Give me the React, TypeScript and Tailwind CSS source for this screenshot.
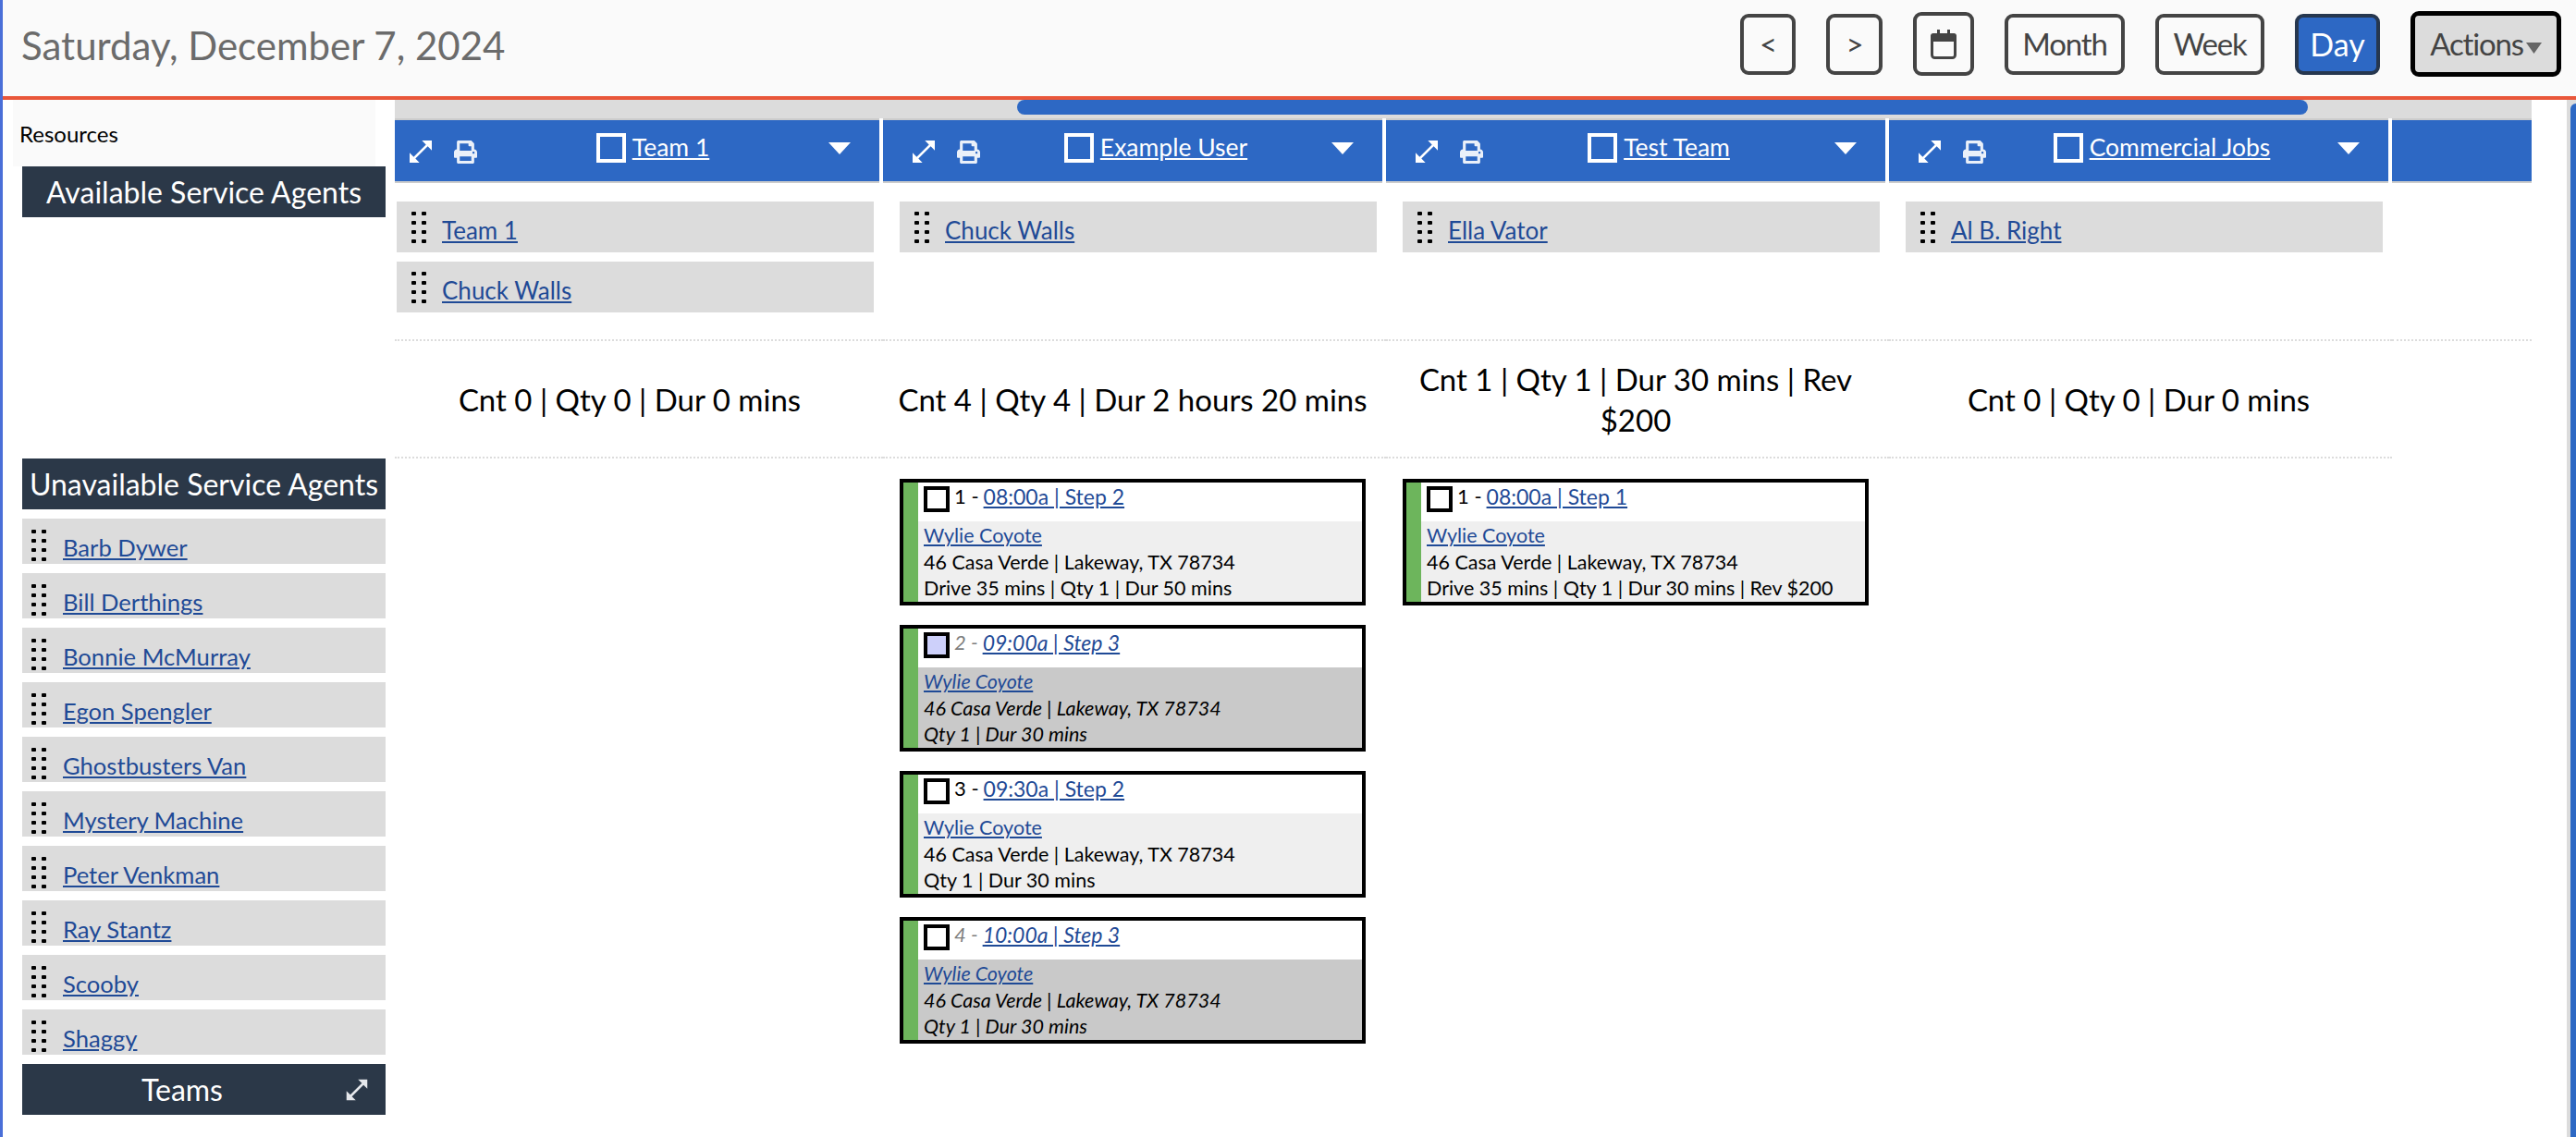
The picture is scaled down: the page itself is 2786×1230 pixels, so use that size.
import { MdOpenInFull } from "react-icons/md";
import { FaPrint } from "react-icons/fa";

const sans = "font-['Lato','Liberation_Sans',sans-serif]";

interface Job {
    n: number;
    time: string;
    last: string;
    dim?: boolean;
    picked?: boolean;
}

interface Column {
    title: string;
    width: string;
    agents: string[];
    summary: string;
    jobs: Job[];
}

const unavailable = [
    "Barb Dywer",
    "Bill Derthings",
    "Bonnie McMurray",
    "Egon Spengler",
    "Ghostbusters Van",
    "Mystery Machine",
    "Peter Venkman",
    "Ray Stantz",
    "Scooby",
    "Shaggy",
];

const columns: Column[] = [
    { title: "Team 1", width: "w-[528px]", agents: ["Team 1", "Chuck Walls"], summary: "Cnt 0 | Qty 0 | Dur 0 mins", jobs: [] },
    {
        title: "Example User",
        width: "w-[544px]",
        agents: ["Chuck Walls"],
        summary: "Cnt 4 | Qty 4 | Dur 2 hours 20 mins",
        jobs: [
            { n: 1, time: "08:00a | Step 2", last: "Drive 35 mins | Qty 1 | Dur 50 mins" },
            { n: 2, time: "09:00a | Step 3", last: "Qty 1 | Dur 30 mins", dim: true, picked: true },
            { n: 3, time: "09:30a | Step 2", last: "Qty 1 | Dur 30 mins" },
            { n: 4, time: "10:00a | Step 3", last: "Qty 1 | Dur 30 mins", dim: true },
        ],
    },
    {
        title: "Test Team",
        width: "w-[544px]",
        agents: ["Ella Vator"],
        summary: "Cnt 1 | Qty 1 | Dur 30 mins | Rev $200",
        jobs: [{ n: 1, time: "08:00a | Step 1", last: "Drive 35 mins | Qty 1 | Dur 30 mins | Rev $200" }],
    },
    { title: "Commercial Jobs", width: "w-[544px]", agents: ["Al B. Right"], summary: "Cnt 0 | Qty 0 | Dur 0 mins", jobs: [] },
];

function Grip() {
    return (
        <svg width="16" height="35" viewBox="0 0 16 35" className="shrink-0 text-black" fill="currentColor">
            {[2, 12, 22, 32].map(y => (
                <g key={y}>
                    <rect x="0" y={y - 2} width="5" height="4" rx="1" />
                    <rect x="11" y={y - 2} width="5" height="4" rx="1" />
                </g>
            ))}
        </svg>
    );
}

function CalendarIcon() {
    return (
        <svg width="28" height="32" viewBox="0 0 28 32" className="text-[#444]" fill="none">
            <rect x="1.5" y="5.5" width="25" height="25" rx="3" stroke="currentColor" strokeWidth="3" />
            <path d="M0 7a3 3 0 0 1 3-3h22a3 3 0 0 1 3 3v6H0z" fill="currentColor" />
            <rect x="7" y="0" width="3" height="5" fill="currentColor" />
            <rect x="18" y="0" width="3" height="5" fill="currentColor" />
        </svg>
    );
}

function NavButton({ label, className }: { label: React.ReactNode; className: string }) {
    return (
        <button className={`flex items-center justify-center rounded-[9px] border-4 border-[#444] text-[33px] leading-none tracking-[-0.036em] text-[#444] ${className}`}>
            {label}
        </button>
    );
}

function AgentRow({ name }: { name: string }) {
    return (
        <div className="flex h-[55px] items-start bg-[#dcdcdc] pl-[16px] pt-[11px]">
            <Grip />
            <a className="ml-[17px] mt-[4px] text-[26px] leading-[32px] text-[#1f4a96] underline">{name}</a>
        </div>
    );
}

function JobCard({ job }: { job: Job }) {
    return (
        <div className={`flex h-[137px] w-[504px] border-4 border-black ${job.dim ? "italic" : ""}`}>
            <div className="w-[16px] shrink-0 bg-[#6db55c]" />
            <div className="flex min-w-0 flex-1 flex-col text-[21.5px] leading-[28.5px]">
                <div className="flex h-[42px] items-start bg-white pl-[6px] pt-[4px]">
                    <span className={`h-[28px] w-[28px] shrink-0 border-4 border-black ${job.picked ? "bg-[#cdd0fa]" : "bg-white"}`} />
                    <span className={`ml-[5px] text-[22px] leading-[22px] ${job.dim ? "text-[#7d7d7d]" : "text-black"}`}>{job.n} - </span>
                    <a className="ml-[5px] text-[23px] leading-[22px] text-[#1f4a96] underline">{job.time}</a>
                </div>
                <div className={`flex-1 overflow-hidden pl-[6px] pt-[1px] text-black ${job.dim ? "bg-[#c9c9c9]" : "bg-[#efefef]"}`}>
                    <a className="block w-fit text-[#1f4a96] underline">Wylie Coyote</a>
                    <div>46 Casa Verde | Lakeway, TX 78734</div>
                    <div>{job.last}</div>
                </div>
            </div>
        </div>
    );
}

function ScheduleColumn({ col, first }: { col: Column; first: boolean }) {
    return (
        <div className={`${col.width} shrink-0`}>
            <div className="mr-[4px] flex h-[70px] items-start border-y-2 border-[#cccccc] bg-[#2d68c4] pr-[31px] text-white">
                <div className={`flex items-center gap-[20px] pt-[18px] ${first ? "pl-[12px]" : "pl-[28px]"}`}>
                    <MdOpenInFull size={32} />
                    <FaPrint size={25} className="opacity-90" />
                </div>
                <div className="flex flex-1 items-start justify-center pt-[14px]">
                    <span className="h-[32px] w-[32px] border-4 border-white" />
                    <a className="ml-[7px] text-[26.5px] leading-[30px] text-white underline">{col.title}</a>
                </div>
                <svg width="24" height="13" viewBox="0 0 24 13" className="mt-[24px] fill-white">
                    <path d="M0 0h24L12 13z" />
                </svg>
            </div>
            <div className={`flex h-[171px] flex-col gap-[10px] border-b-2 border-dotted border-[#dcdcdc] pt-[20px] pr-[10px] ${first ? "pl-[2px]" : "pl-[18px]"}`}>
                {col.agents.map(name => (
                    <AgentRow key={name} name={name} />
                ))}
            </div>
            <div className={`flex h-[127px] items-center justify-center border-b-2 border-dotted border-[#dcdcdc] text-center text-[33px] leading-[44px] text-black ${first ? "pr-[20px]" : "pr-[4px]"}`}>
                <div className="px-[4px]">{col.summary}</div>
            </div>
            <div className={`flex flex-col gap-[21px] pt-[22px] ${first ? "pl-[2px]" : "pl-[18px]"}`}>
                {col.jobs.map(job => (
                    <JobCard key={job.n} job={job} />
                ))}
            </div>
        </div>
    );
}

export default function App() {
    return (
        <div className={`flex h-[1230px] w-full flex-col overflow-hidden border-l-[3px] border-[#4a6fd8] bg-white ${sans}`}>
            <header className="flex h-[108px] shrink-0 items-start border-b-4 border-[#e9573a] bg-[#fafafa] pl-[20px]">
                <h1 className="mt-[25px] text-[42px] font-normal leading-[48px] text-[#6b6b6b]">Saturday, December 7, 2024</h1>
                <div className="ml-auto flex items-center gap-[33px] pr-[16px] pt-[12px]">
                    <NavButton label="<" className="h-[66px] w-[60px] bg-[#fafafa]" />
                    <NavButton label=">" className="h-[66px] w-[61px] bg-[#fafafa]" />
                    <NavButton label={<CalendarIcon />} className="h-[69px] w-[66px] bg-[#fafafa]" />
                    <NavButton label="Month" className="h-[66px] w-[130px] bg-[#fafafa]" />
                    <NavButton label="Week" className="h-[66px] w-[118px] bg-[#fafafa]" />
                    <button className="flex h-[66px] w-[92px] items-center justify-center rounded-[9px] border-4 border-[#26374f] bg-[#2d68c4] text-[34px] leading-none text-white">
                        Day
                    </button>
                    <button className="flex h-[71px] w-[163px] items-center justify-center gap-[3px] rounded-[9px] border-[5px] border-black bg-[#dcdcdc] text-[33px] leading-none tracking-[-0.036em] text-[#444]">
                        Actions
                        <svg width="17" height="12" viewBox="0 0 17 12" className="mt-[9px] fill-[#666]">
                            <path d="M0 0h17L8.5 12z" />
                        </svg>
                    </button>
                </div>
            </header>

            <div className="flex min-h-0 flex-1">
                <aside className="w-[424px] shrink-0">
                    <div className="ml-[11px] h-[72px] w-[392px] bg-[#fafafa] pl-[7px] pt-[22px] text-[24px] leading-[30px] text-black">Resources</div>
                    <div className="ml-[21px] mr-[10px] flex h-[55px] items-center justify-center whitespace-nowrap bg-[#2b3848] text-[32px] text-white">Available Service Agents</div>
                    <div className="ml-[21px] mr-[10px] mt-[261px] flex h-[55px] items-center justify-center whitespace-nowrap bg-[#2b3848] text-[32px] text-white">Unavailable Service Agents</div>
                    <div className="ml-[21px] mr-[10px] mt-[10px] flex flex-col gap-[10px]">
                        {unavailable.map(name => (
                            <div key={name} className="flex h-[49px] items-start overflow-hidden bg-[#dcdcdc] pl-[10px] pt-[12px]">
                                <Grip />
                                <a className="ml-[18px] mt-[3px] text-[25.6px] leading-[32px] text-[#1f4a96] underline">{name}</a>
                            </div>
                        ))}
                    </div>
                    <div className="ml-[21px] mr-[10px] mt-[10px] flex h-[55px] items-center bg-[#2b3848] pl-[129px] text-[32px] text-white">
                        Teams
                        <MdOpenInFull size={30} className="ml-auto mr-[16px] text-[#e5e7eb]" />
                    </div>
                </aside>

                <main className="w-[2311px] shrink-0">
                    <div className="h-[20px] bg-[#dcdcdc]">
                        <div className="ml-[673px] h-[16px] w-[1396px] rounded-r-full rounded-l-full bg-[#2d68c4]" />
                    </div>
                    <div className="flex">
                        {columns.map((col, i) => (
                            <ScheduleColumn key={col.title} col={col} first={i === 0} />
                        ))}
                        <div className="w-[151px] shrink-0">
                            <div className="h-[70px] border-y-2 border-[#cccccc] bg-[#2d68c4]" />
                            <div className="h-[171px] border-b-2 border-dotted border-[#dcdcdc]" />
                        </div>
                    </div>
                </main>

                <div className="ml-[38px] w-[10px] bg-[#dcdcdc] pl-[4px] pt-[4px]">
                    <div className="h-full rounded-tl-[7px] bg-[#2d68c4]" />
                </div>
            </div>
        </div>
    );
}
